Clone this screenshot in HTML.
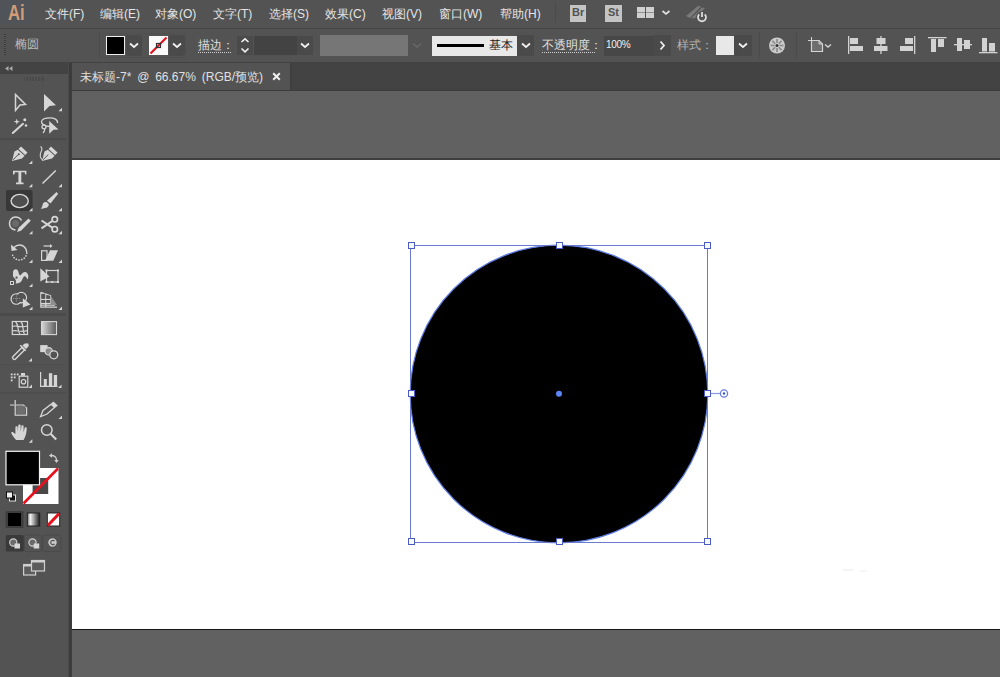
<!DOCTYPE html>
<html><head><meta charset="utf-8">
<style>
*{margin:0;padding:0;box-sizing:border-box}
html,body{width:1000px;height:677px;overflow:hidden;background:#535353;font-family:"Liberation Sans",sans-serif}
.abs{position:absolute}
#menubar{position:absolute;left:0;top:0;width:1000px;height:28px;background:#535353}
#menuline{position:absolute;left:0;top:28px;width:1000px;height:1px;background:#454545}
#ctrl{position:absolute;left:0;top:29px;width:1000px;height:33px;background:#535353}
#ctrlline{position:absolute;left:0;top:62px;width:1000px;height:1px;background:#424242}
#tabrow{position:absolute;left:72px;top:63px;width:928px;height:28px;background:#434343}
#tab{position:absolute;left:72px;top:63px;width:218px;height:27px;background:#535353}
#tabline{position:absolute;left:72px;top:90px;width:928px;height:1px;background:#3c3c3c}
#canvas{position:absolute;left:72px;top:91px;width:928px;height:586px;background:#616161}
#artboard{position:absolute;left:72px;top:160px;width:928px;height:469px;background:#fff}
#abtop{position:absolute;left:72px;top:158px;width:928px;height:2px;background:#3f3f3f}
#abbot{position:absolute;left:72px;top:629px;width:928px;height:1px;background:#151515}
#tbhead{position:absolute;left:0;top:63px;width:68px;height:11px;background:#434343}
#tb{position:absolute;left:0;top:74px;width:68px;height:603px;background:#535353}
#tbedge{position:absolute;left:68px;top:63px;width:4px;height:614px;background:#454545}
.menu{position:absolute;top:6px;font-size:12px;color:#e4e4e4;white-space:nowrap}
</style></head><body>
<div id="menubar"></div><div id="menuline"></div>
<div id="ctrl"></div><div id="ctrlline"></div>
<div id="tabrow"></div><div id="tab"></div><div class="abs" style="left:290px;top:63px;width:2px;height:27px;background:#3e3e3e"></div><div id="tabline"></div>
<div id="canvas"></div><div id="abtop"></div><div id="artboard"></div><div id="abbot"></div>
<div id="tbhead"></div><div id="tb"></div><div id="tbedge"></div>

<!-- menu -->
<div class="abs" style="left:0;top:0;width:31px;height:24px;background:#505357"></div><div class="abs" style="left:8px;top:0px;font-size:22px;font-weight:bold;color:#d39c78;letter-spacing:0px;transform:scaleX(0.76);transform-origin:0 0">Ai</div>
<div class="menu" style="left:45px">文件(F)</div>
<div class="menu" style="left:100px">编辑(E)</div>
<div class="menu" style="left:155px">对象(O)</div>
<div class="menu" style="left:213px">文字(T)</div>
<div class="menu" style="left:269px">选择(S)</div>
<div class="menu" style="left:325px">效果(C)</div>
<div class="menu" style="left:382px">视图(V)</div>
<div class="menu" style="left:439px">窗口(W)</div>
<div class="menu" style="left:500px">帮助(H)</div>


<!-- control bar -->
<div class="abs" style="left:4px;top:34px;width:2px;height:21px;background:repeating-linear-gradient(#3a3a3a 0 1px,#5a5a5a 1px 2px)"></div>
<div class="abs" style="left:15px;top:36px;font-size:12px;color:#bcbcbc;white-space:nowrap">椭圆</div>
<div class="abs" style="left:99px;top:32px;width:1px;height:26px;background:#4a4a4a"></div>
<!-- fill swatch -->
<div class="abs" style="left:102px;top:33px;width:84px;height:25px;border:1px solid #4f4f4f"></div>
<div class="abs" style="left:106px;top:36px;width:19px;height:19px;background:#000;border:1px solid #f0f0f0"></div>
<div class="abs" style="left:126px;top:35px;width:16px;height:21px;background:#4a4a4a;border-radius:2px"></div>
<svg class="abs" style="left:129px;top:42px" width="10" height="7"><polyline points="1,1.5 5,5 9,1.5" fill="none" stroke="#f0f0f0" stroke-width="1.8"/></svg>
<!-- stroke swatch -->
<div class="abs" style="left:149px;top:36px;width:19px;height:19px;background:#fafafa"></div>
<svg class="abs" style="left:149px;top:36px" width="19" height="19"><line x1="1.5" y1="17.5" x2="17.5" y2="1.5" stroke="#e0101e" stroke-width="2.2"/><rect x="7.5" y="7.5" width="4" height="4" fill="none" stroke="#333" stroke-width="1.2"/></svg>
<div class="abs" style="left:169px;top:35px;width:16px;height:21px;background:#4a4a4a;border-radius:2px"></div>
<svg class="abs" style="left:172px;top:42px" width="10" height="7"><polyline points="1,1.5 5,5 9,1.5" fill="none" stroke="#f0f0f0" stroke-width="1.8"/></svg>
<!-- stroke weight -->
<div class="abs" style="left:198px;top:37px;font-size:12px;color:#e0e0e0;white-space:nowrap">描边：</div>
<div class="abs" style="left:198px;top:52px;width:34px;height:1px;background:repeating-linear-gradient(90deg,#cfcfcf 0 1px,transparent 1px 2px)"></div>
<div class="abs" style="left:237px;top:36px;width:16px;height:19px;background:#4a4a4a"></div>
<svg class="abs" style="left:240px;top:37px" width="10" height="17"><polyline points="1.5,5 5,1.8 8.5,5" fill="none" stroke="#f0f0f0" stroke-width="1.6"/><polyline points="1.5,11.5 5,14.8 8.5,11.5" fill="none" stroke="#f0f0f0" stroke-width="1.6"/></svg>
<div class="abs" style="left:254px;top:36px;width:43px;height:19px;background:#434343"></div>
<div class="abs" style="left:297px;top:36px;width:16px;height:19px;background:#4a4a4a"></div>
<svg class="abs" style="left:300px;top:42px" width="10" height="7"><polyline points="1,1.5 5,5 9,1.5" fill="none" stroke="#f0f0f0" stroke-width="1.8"/></svg>
<div class="abs" style="left:320px;top:35px;width:88px;height:21px;background:#767676"></div>
<svg class="abs" style="left:412px;top:42px" width="10" height="7"><polyline points="1,1.5 5,5 9,1.5" fill="none" stroke="#6a6a6a" stroke-width="1.5"/></svg>
<!-- brush -->
<div class="abs" style="left:432px;top:36px;width:85px;height:20px;background:#e8e8e8"></div>
<div class="abs" style="left:437px;top:44px;width:47px;height:3px;background:#000"></div>
<div class="abs" style="left:489px;top:37px;font-size:12px;color:#222;white-space:nowrap">基本</div>
<div class="abs" style="left:517px;top:35px;width:17px;height:21px;background:#4a4a4a"></div>
<svg class="abs" style="left:521px;top:42px" width="10" height="7"><polyline points="1,1.5 5,5 9,1.5" fill="none" stroke="#f0f0f0" stroke-width="1.8"/></svg>
<!-- opacity -->
<div class="abs" style="left:542px;top:37px;font-size:12px;color:#e0e0e0;white-space:nowrap">不透明度：</div>
<div class="abs" style="left:542px;top:52px;width:54px;height:1px;background:repeating-linear-gradient(90deg,#cfcfcf 0 1px,transparent 1px 2px)"></div>
<div class="abs" style="left:604px;top:36px;width:50px;height:20px;background:#474747"></div>
<div class="abs" style="left:606px;top:39px;font-size:10px;color:#f0f0f0;white-space:nowrap;letter-spacing:-0.3px">100%</div>
<div class="abs" style="left:654px;top:35px;width:17px;height:21px;background:#4a4a4a"></div>
<svg class="abs" style="left:659px;top:40px" width="7" height="11"><polyline points="1.5,1.5 5,5.5 1.5,9.5" fill="none" stroke="#f0f0f0" stroke-width="1.8"/></svg>
<!-- style -->
<div class="abs" style="left:677px;top:37px;font-size:12px;color:#b4b4b4;white-space:nowrap">样式：</div>
<div class="abs" style="left:716px;top:36px;width:18px;height:19px;background:#e8e8e8"></div>
<div class="abs" style="left:734px;top:35px;width:18px;height:21px;background:#4a4a4a"></div>
<svg class="abs" style="left:738px;top:42px" width="10" height="7"><polyline points="1,1.5 5,5 9,1.5" fill="none" stroke="#f0f0f0" stroke-width="1.8"/></svg>
<div class="abs" style="left:759px;top:32px;width:1px;height:26px;background:#4a4a4a"></div>
<!-- recolor -->
<svg class="abs" style="left:767px;top:36px" width="20" height="20">
<circle cx="10" cy="9.5" r="8" fill="#cbcbcb"/>
<g stroke="#8a8a8a" stroke-width="1.6">
<line x1="10" y1="3" x2="10" y2="7"/><line x1="10" y1="12" x2="10" y2="16"/>
<line x1="3.5" y1="9.5" x2="7.5" y2="9.5"/><line x1="12.5" y1="9.5" x2="16.5" y2="9.5"/>
<line x1="5.4" y1="4.9" x2="8.2" y2="7.7"/><line x1="11.8" y1="11.3" x2="14.6" y2="14.1"/>
<line x1="14.6" y1="4.9" x2="11.8" y2="7.7"/><line x1="8.2" y1="11.3" x2="5.4" y2="14.1"/>
</g>
<circle cx="10" cy="9.5" r="1.5" fill="#333"/>
</svg>
<div class="abs" style="left:796px;top:32px;width:1px;height:26px;background:#4a4a4a"></div>
<!-- doc icon -->
<svg class="abs" style="left:806px;top:35px" width="28" height="19">
<path d="M5.5,5.5 H13 L16.5,9 V16.5 H5.5 Z" fill="#6e6e6e" stroke="#d4d4d4" stroke-width="1.2"/>
<path d="M13,5.5 V9 H16.5" fill="none" stroke="#d4d4d4" stroke-width="1"/>
<line x1="2" y1="5.5" x2="5" y2="5.5" stroke="#d4d4d4" stroke-width="1"/>
<line x1="5.5" y1="2" x2="5.5" y2="5" stroke="#d4d4d4" stroke-width="1"/>
<polyline points="19,9.5 22,12 25,9.5" fill="none" stroke="#d0d0d0" stroke-width="1.5"/>
</svg>
<!-- align icons -->
<svg class="abs" style="left:840px;top:30px" width="160" height="32" fill="#d2d2d2">
<rect x="8" y="6" width="1.3" height="18"/><rect x="10" y="8" width="8" height="6"/><rect x="10" y="16" width="13" height="5"/>
<rect x="40.3" y="6" width="1.3" height="18"/><rect x="36.5" y="8" width="9" height="6"/><rect x="34" y="16" width="13.5" height="5"/>
<rect x="74" y="6" width="1.3" height="18"/><rect x="65" y="8" width="8" height="6"/><rect x="60" y="16" width="13" height="5"/>
<rect x="88" y="7" width="18.5" height="1.3"/><rect x="91" y="9" width="5" height="13"/><rect x="98" y="9" width="6" height="8"/>
<rect x="114" y="14" width="18" height="1.3"/><rect x="117" y="8" width="5" height="13"/><rect x="124" y="10" width="6" height="9"/>
<rect x="139" y="22" width="18.5" height="1.3"/><rect x="142" y="8" width="5" height="13.5"/><rect x="149" y="13" width="6" height="8.5"/>
</svg>


<!-- toolbar -->
<svg class="abs" style="left:0;top:0" width="72" height="677">
<g fill="#4b4b4b"><rect x="0" y="313" width="66" height="3"/><rect x="0" y="138" width="66" height="2"/></g><g fill="#4e4e4e"><rect x="0" y="392" width="66" height="2"/><rect x="0" y="364" width="66" height="1"/></g>
<rect x="68" y="63" width="1" height="614" fill="#4a4a4a"/><rect x="69" y="63" width="3" height="614" fill="#3c3c3c"/>
<g fill="#a8a8a8"><path d="M8.5,66 L5,68.5 L8.5,71 Z M12.5,66 L9,68.5 L12.5,71 Z"/></g>
<rect x="24" y="77" width="20" height="4" fill="#4a4a4a"/><g fill="#555"><rect x="25" y="77" width="1" height="4"/><rect x="28" y="77" width="1" height="4"/><rect x="31" y="77" width="1" height="4"/><rect x="34" y="77" width="1" height="4"/><rect x="37" y="77" width="1" height="4"/><rect x="40" y="77" width="1" height="4"/></g>

<g fill="none" stroke="#d6d6d6" stroke-width="1.5" stroke-linejoin="miter">
<!-- selection -->
<path d="M15.5,94.5 L25.5,104.5 L20,105 L15.5,110.5 Z"/>
</g>
<g fill="#d6d6d6">
<path d="M44,94 L56,105.3 L49.5,106 L44,111.5 Z"/>
</g>
<!-- magic wand -->
<g stroke="#d6d6d6" fill="#d6d6d6">
<line x1="12.8" y1="133" x2="23" y2="123.8" stroke-width="2" stroke-linecap="round"/>
<path d="M16.8,118.5 L17.6,120.9 L20,121.6 L17.6,122.4 L16.8,124.8 L16,122.4 L13.6,121.6 L16,120.9 Z" stroke="none"/>
<circle cx="24.8" cy="119.8" r="1.5" stroke="none"/><circle cx="26" cy="125.5" r="1.3" stroke="none"/>
</g>
<!-- lasso -->
<g fill="none" stroke="#d6d6d6" stroke-width="1.3">
<path d="M50,126.5 C45,126.5 41.2,124 41.5,121.5 C42,118.8 46,117.8 50,117.8 C54,117.8 58,119.5 57.5,123"/>
<circle cx="44" cy="126.8" r="2"/>
<path d="M44.5,128.8 C45.2,130.5 44,132 43,133"/>
</g>
<path d="M49.2,121 L58.5,129.6 L53.5,129.8 L49.2,133.8 Z" fill="#d6d6d6"/>
<!-- pen -->
<g fill="#d6d6d6">
<path d="M21,146.5 L27.5,152.5 L25.2,155 L18.5,149 Z"/>
<path d="M17.8,149.8 L24.6,155.8 L22,158.5 L12,161 L14.5,151.5 Z"/>
</g>
<line x1="12.8" y1="160" x2="18.2" y2="154.6" stroke="#535353" stroke-width="1"/>
<circle cx="18.8" cy="154.2" r="1" fill="#535353"/>
<!-- curvature pen -->
<g fill="#d6d6d6">
<path d="M51,146.5 L57.5,152.5 L55.2,155 L48.5,149 Z"/>
<path d="M47.8,149.8 L54.6,155.8 L52,158.5 L42,161 L44.5,151.5 Z"/>
</g>
<line x1="42.8" y1="160" x2="48.2" y2="154.6" stroke="#535353" stroke-width="1"/>
<path d="M40.5,146.5 C43,148 42,150 41,152 C39.5,155 40,159 43,160" fill="none" stroke="#d6d6d6" stroke-width="1.1"/>
<!-- type -->
<path d="M13,170.8 H26.4 V174.4 H25.2 L24.6,172.3 H21.3 V182.6 H23.5 V184.2 H16 V182.6 H18.4 V172.3 H15 L14.3,174.4 H13 Z" fill="#d6d6d6"/>
<!-- line -->
<line x1="42.5" y1="183.5" x2="55.8" y2="170.5" stroke="#d6d6d6" stroke-width="1.5"/>
<!-- ellipse selected -->
<rect x="6" y="190" width="26.5" height="21" rx="2" fill="#383838"/>
<ellipse cx="19.7" cy="201" rx="8.6" ry="6.6" fill="#4e4e4e" stroke="#d6d6d6" stroke-width="1.4"/>
<!-- paintbrush -->
<path d="M56.5,192 L58.2,193.8 L50.5,203.5 L47,200.8 Z" fill="#d6d6d6"/>
<path d="M46.5,202 C44,201.5 42.5,203.5 42.5,205.5 L41,209 L45,208 C47.5,208 49,206 48.8,204 Z" fill="#d6d6d6"/>
<!-- shaper -->
<path d="M21.5,220.5 C20,217.8 17.5,217 15.5,217 C11.5,217 9.5,220.5 9.5,223.5 C9.5,227 12,229.5 15.5,230" fill="none" stroke="#d6d6d6" stroke-width="1.5"/>
<circle cx="15.5" cy="223.5" r="3.5" fill="#6a6a6a"/>
<path d="M28.5,218.5 L30.8,220.8 L21,230.8 L17,232 L18.5,228 Z" fill="#d6d6d6"/>
<!-- scissors -->
<g fill="none" stroke="#d6d6d6" stroke-width="1.7">
<circle cx="54.8" cy="219.3" r="2.7"/><circle cx="54.8" cy="229.2" r="2.7"/>
<path d="M41.5,220.5 L52.3,227.6 M41.5,228.3 L52.3,221" stroke-width="2"/>
</g>
<!-- rotate -->
<g fill="none" stroke="#d6d6d6" stroke-width="1.5">
<path d="M14,247.5 C16,245.5 18,245 19.5,245 C23.5,245 26.8,248.5 26.8,252.5"/>
<path d="M26.8,252.5 C26.8,256.5 23.5,260 19.5,260 C15.5,260 12.5,257 12.3,253.5" stroke-dasharray="1.5 1.3"/>
</g>
<path d="M11,244.5 L11.5,251 L17.5,250 Z" fill="#d6d6d6"/>
<!-- shear -->
<g fill="none" stroke="#d6d6d6" stroke-width="1.2">
<rect x="41.6" y="250.8" width="5.4" height="9.6"/>
<line x1="43.5" y1="246" x2="51" y2="246"/>
</g>
<path d="M50,244 L52.5,246 L50,248 Z" fill="#d6d6d6"/>
<path d="M45,260.7 L50,250.3 H58 L53.3,260.7 Z" fill="#d6d6d6"/>
<!-- puppet warp -->
<path d="M13,272.5 C13,269.5 16,268.5 17.5,270 C19,271.5 18,273 19.5,275 C21,276.5 22.5,271 25.5,272 C28.5,273 29,277 27.5,279.5 C26.5,277 25.5,275.5 24,276.5 C22,278 22.5,283 17,283.5 L15.5,283.5 C17,281 15,278 13,276.5 Z" fill="#d6d6d6"/>
<circle cx="16.5" cy="277.5" r="1.5" fill="#535353" stroke="#d6d6d6" stroke-width="0.8"/>
<rect x="10.5" y="281.5" width="3" height="3" fill="none" stroke="#d6d6d6" stroke-width="1"/>
<!-- free transform -->
<path d="M40.3,268.3 L49.5,276.4 L40.3,281.5 Z" fill="#d6d6d6"/>
<rect x="46.5" y="270.5" width="11.5" height="11.5" fill="none" stroke="#d6d6d6" stroke-width="1.2"/>
<g fill="#d6d6d6"><rect x="45.5" y="269.5" width="2" height="2"/><rect x="57" y="269.5" width="2" height="2"/><rect x="45.5" y="281" width="2" height="2"/><rect x="57" y="281" width="2" height="2"/><rect x="51.3" y="281" width="2" height="2"/></g>
<!-- shape builder -->
<g fill="none" stroke="#d6d6d6" stroke-width="1.3">
<circle cx="16.3" cy="299" r="5.2"/><circle cx="21.3" cy="297.6" r="5.2"/>
</g>
<g fill="#535353"><circle cx="16.3" cy="299" r="4.5"/><circle cx="21.3" cy="297.6" r="4.5"/></g>
<path d="M13,298.5 H20 M16.5,295.5 V302" stroke="#9a9a9a" stroke-width="0.9" stroke-dasharray="1 1"/>
<path d="M22.8,298.3 L30.5,304.6 L22.8,307.6 Z" fill="#d6d6d6"/>
<!-- perspective grid -->
<g fill="none" stroke="#d6d6d6" stroke-width="1.2">
<path d="M40.8,292.3 V307.2 H57 M40.8,292.3 L50.5,295.6 V303.3 H40.8 M40.8,299.3 H50.5 M45.8,294 V307.2 M40.8,305.2 H55"/>
</g>
<path d="M50.5,295.6 L57,305 H50.5 Z" fill="#8e8e8e"/>
<g fill="#535353"><rect x="41.5" y="293.8" width="3.6" height="4.8"/><rect x="46.5" y="295.5" width="3.3" height="3.2"/><rect x="41.5" y="300" width="3.6" height="2.7"/><rect x="46.5" y="300" width="3.3" height="2.7"/></g>
<!-- mesh -->
<g fill="none" stroke="#d6d6d6" stroke-width="1.2">
<rect x="12.3" y="321.5" width="15.2" height="13"/>
<path d="M15.5,321.5 C19,325 17,330 20,334.5 M21,321.5 C24,325 22,330 24.5,334.5 M12.3,326.5 C16,324.5 21,328.5 27.5,326 M12.3,331 C16,329.5 21,333 27.5,330.5"/>
</g>
<!-- gradient -->
<defs><linearGradient id="gr1" x1="0" x2="1"><stop offset="0" stop-color="#d8d8d8"/><stop offset="1" stop-color="#5a5a5a"/></linearGradient>
<linearGradient id="gr2" x1="0" x2="1"><stop offset="0" stop-color="#707070"/><stop offset="0.25" stop-color="#f2f2f2"/><stop offset="1" stop-color="#1a1a1a"/></linearGradient></defs>
<rect x="41.5" y="321.6" width="15" height="13" fill="url(#gr1)" stroke="#d6d6d6" stroke-width="1.1"/>
<!-- eyedropper -->
<g fill="none" stroke="#d6d6d6" stroke-width="1.4">
<path d="M13,356.5 L22,347.5 L24.5,350 L15.5,359 C14,360.5 11.5,358 13,356.5 Z"/>
</g>
<path d="M22.5,345.5 L26,349 L28,347 C29.3,345.7 29,343.5 27.2,343.2 C26,343 25,344 24.5,343.5 Z" fill="#d6d6d6"/><line x1="20.3" y1="345.3" x2="25.7" y2="350.7" stroke="#d6d6d6" stroke-width="1.6"/>
<!-- blend -->
<rect x="40.2" y="345.1" width="7.4" height="7" fill="#d6d6d6"/>
<circle cx="48.7" cy="351.3" r="3.7" fill="#8a8a8a" stroke="#d6d6d6" stroke-width="1.2"/>
<circle cx="53.8" cy="354.8" r="4" fill="#535353" stroke="#d6d6d6" stroke-width="1.3"/>
<!-- symbol sprayer -->
<g fill="#d6d6d6"><rect x="10.8" y="373.5" width="1.8" height="1.8"/><rect x="13.8" y="373.5" width="1.8" height="1.8"/><rect x="16.8" y="373.5" width="1.8" height="1.8"/><rect x="10.8" y="376.5" width="1.8" height="1.8"/><rect x="13.8" y="376.5" width="1.8" height="1.8"/><rect x="10.8" y="379.5" width="1.8" height="1.8"/>
<rect x="21" y="373" width="4" height="2.8"/></g>
<rect x="19.2" y="376.2" width="8.6" height="11" fill="none" stroke="#d6d6d6" stroke-width="1.2"/>
<circle cx="23.5" cy="381.7" r="2.2" fill="none" stroke="#d6d6d6" stroke-width="1.2"/>
<!-- column graph -->
<path d="M40.6,372 V386.3 H57.5" fill="none" stroke="#d6d6d6" stroke-width="1.2"/>
<g fill="#d6d6d6"><rect x="43.8" y="379" width="3" height="7"/><rect x="48.9" y="373.2" width="3.3" height="13"/><rect x="53.8" y="375" width="3.3" height="11"/></g>
<!-- artboard -->
<g fill="none" stroke="#d6d6d6" stroke-width="1.2">
<path d="M10,405 H14.5 M15.2,400 V404.5"/>
<path d="M15.2,405 H23.5 L26.6,408 V415.2 H15.2 Z"/>
</g>
<rect x="16.3" y="406" width="9.2" height="8.3" fill="#6e6e6e"/>
<!-- pencil/knife -->
<path d="M53.5,402.4 L56.8,405.4 L47,414 L40.6,416.5 L43,410.4 Z" fill="none" stroke="#d6d6d6" stroke-width="1.3"/>
<path d="M53.5,402.4 L56.8,405.4 L54.2,408 L51,405 Z" fill="#d6d6d6"/>
<!-- hand -->
<path transform="translate(11,0) scale(1.26,1) translate(-11,0)" d="M15,440 C13,437 11,433.5 11.2,432.5 C11.5,431.5 12.8,432 14,433.5 L14.5,434 V427 C14.5,426 16.3,426 16.3,427 V432 L16.8,425.5 C16.8,424.3 18.7,424.3 18.7,425.5 V432 L19.3,426 C19.3,425 21,425 21,426 V432.5 L21.8,428 C21.8,427 23.5,427 23.5,428 C23.5,431 23,436 21,440 Z" fill="#d6d6d6"/>
<!-- zoom -->
<circle cx="46.8" cy="430" r="5.3" fill="none" stroke="#d6d6d6" stroke-width="1.5"/>
<line x1="50.6" y1="433.8" x2="56.2" y2="439.5" stroke="#d6d6d6" stroke-width="2.2"/>
<!-- fill / stroke -->
<rect x="23" y="468" width="35.5" height="36" fill="#fff"/>
<rect x="32.6" y="478" width="15.6" height="16" fill="#484848"/>
<line x1="23.5" y1="503.5" x2="58" y2="468.5" stroke="#e8101c" stroke-width="2.6"/>
<rect x="6" y="451.3" width="33.5" height="33.5" fill="#000" stroke="#f2f2f2" stroke-width="1.2"/>
<path d="M51.5,455.5 C54.5,455.5 56.5,457.5 56.5,460" fill="none" stroke="#cfcfcf" stroke-width="1.3"/>
<path d="M49,455.5 L52,453.3 V457.7 Z M56.5,463 L54.3,460 H58.7 Z" fill="#cfcfcf"/>
<rect x="9.5" y="495" width="6" height="6" fill="#111" stroke="#e0e0e0" stroke-width="1"/>
<rect x="6.5" y="492" width="6" height="6" fill="#f2f2f2" stroke="#111" stroke-width="1"/>
<!-- color modes -->
<rect x="5.5" y="511" width="18" height="17" rx="1.5" fill="#3e3e3e"/>
<rect x="8" y="513" width="13" height="13" fill="#000"/>
<rect x="27.3" y="513" width="12.4" height="13" fill="url(#gr2)" stroke="#222" stroke-width="1"/>
<rect x="47.3" y="513" width="12.4" height="13" fill="#fff" stroke="#222" stroke-width="1"/>
<line x1="47.8" y1="525.5" x2="59.2" y2="513.5" stroke="#e8101c" stroke-width="3"/>
<!-- draw modes -->
<rect x="5.8" y="535" width="18" height="16.5" rx="1.5" fill="#3a3a3a"/>
<rect x="24.5" y="535" width="17" height="16.5" rx="1.5" fill="none" stroke="#4a4a4a" stroke-width="1"/>
<rect x="43" y="535" width="18" height="16.5" rx="1.5" fill="none" stroke="#4a4a4a" stroke-width="1"/>
<g fill="#6a6a6a" stroke="#d0d0d0" stroke-width="1.2">
<circle cx="13.3" cy="542.5" r="3.6"/><circle cx="32.5" cy="542.5" r="3.6"/>
</g>
<rect x="14.5" y="543.5" width="5.5" height="5" fill="#d6d6d6"/>
<rect x="33.7" y="543.5" width="5.5" height="5" fill="#d6d6d6"/>
<circle cx="52.5" cy="542.5" r="4.2" fill="#c8c8c8"/>
<path d="M54.5,541 A2.2,2.2 0 1 0 54.5,544" fill="none" stroke="#555" stroke-width="1.2"/>
<!-- screen mode -->
<g fill="#5c5c5c" stroke="#cfcfcf" stroke-width="1.2">
<rect x="23.6" y="564.5" width="12" height="10.5"/>
<rect x="31.5" y="560.5" width="13" height="10.5"/>
</g>
<rect x="31.5" y="560.5" width="13" height="2" fill="#cfcfcf"/>
<rect x="23.6" y="564.5" width="8" height="2" fill="#cfcfcf"/>
<g fill="#d6d6d6" stroke="none"><path d="M58.5,111.3 L62.0,107.8 V111.3 Z"/><path d="M28.8,164.1 L32.3,160.6 V164.1 Z"/><path d="M28.8,187.3 L32.3,183.8 V187.3 Z"/><path d="M58.5,187.3 L62.0,183.8 V187.3 Z"/><path d="M29,211.3 L32.5,207.8 V211.3 Z"/><path d="M58.5,211.3 L62.0,207.8 V211.3 Z"/><path d="M29,234.3 L32.5,230.8 V234.3 Z"/><path d="M58.5,234.3 L62.0,230.8 V234.3 Z"/><path d="M29,263.1 L32.5,259.6 V263.1 Z"/><path d="M58.5,263.1 L62.0,259.6 V263.1 Z"/><path d="M29,287.1 L32.5,283.6 V287.1 Z"/><path d="M29,310.0 L32.5,306.5 V310.0 Z"/><path d="M58.5,310.0 L62.0,306.5 V310.0 Z"/><path d="M28.5,361.5 L32.0,358 V361.5 Z"/><path d="M28.5,388.0 L32.0,384.5 V388.0 Z"/><path d="M58,388.0 L61.5,384.5 V388.0 Z"/><path d="M58.5,419.0 L62.0,415.5 V419.0 Z"/><path d="M28.8,442.8 L32.3,439.3 V442.8 Z"/></g>
</svg>


<!-- menubar icons -->
<div class="abs" style="left:555px;top:3px;width:1px;height:20px;background:#4a4a4a"></div>
<div class="abs" style="left:570px;top:5px;width:16px;height:17px;background:#c4c4c4"></div>
<div class="abs" style="left:572px;top:6px;font-size:11px;font-weight:bold;color:#535353;white-space:nowrap">Br</div>
<div class="abs" style="left:605px;top:5px;width:17px;height:17px;background:#c4c4c4"></div>
<div class="abs" style="left:608px;top:6px;font-size:11px;font-weight:bold;color:#535353;white-space:nowrap">St</div>
<svg class="abs" style="left:636px;top:6px" width="36" height="14" fill="#d0d0d0">
<rect x="1" y="1" width="8" height="5.5"/><rect x="1" y="7" width="8" height="5"/><rect x="10" y="1" width="8" height="5.5"/><rect x="10" y="7" width="8" height="5"/>
<polyline points="26.5,5 30,8 33.5,5" fill="none" stroke="#e0e0e0" stroke-width="1.7"/>
</svg>
<svg class="abs" style="left:684px;top:3px" width="26" height="21">
<path d="M2,13 L14,3 L17,3.5 L6,15 Z M7,15.5 L18,4.5 L21,5 L11,15 Z" fill="#7a7a7a"/>
<circle cx="18" cy="14" r="6" fill="#535353"/>
<path d="M15.3,11.3 A4,4 0 1 0 20.7,11.3" fill="none" stroke="#dcdcdc" stroke-width="1.8"/>
<line x1="18" y1="9" x2="18" y2="14" stroke="#dcdcdc" stroke-width="1.8"/>
</svg>
<!-- tab close -->
<svg class="abs" style="left:272px;top:72px" width="9" height="9"><path d="M1.2,1.2 L7.8,7.8 M7.8,1.2 L1.2,7.8" stroke="#f0f0f0" stroke-width="2"/></svg>

<div class="abs" style="left:843px;top:569px;width:10px;height:2px;background:#f4f4f4"></div><div class="abs" style="left:860px;top:570px;width:7px;height:2px;background:#f6f6f6"></div>
<!-- tab text -->
<div class="abs" style="left:80px;top:69px;font-size:12px;color:#e0e0e0;white-space:nowrap;word-spacing:2.5px">未标题-7* @ 66.67% (RGB/预览)</div>

<!-- circle -->
<svg class="abs" style="left:0;top:0" width="1000" height="677">
<circle cx="559" cy="394" r="148.8" fill="#000"/>
<circle cx="559" cy="394" r="148.8" fill="none" stroke="#5f7de0" stroke-width="1.2"/>
<rect x="410.5" y="245.5" width="297" height="297" fill="none" stroke="#6a7bd0" stroke-width="1"/>
<g fill="#f4fcff" stroke="#4c5cc4" stroke-width="1"><rect x="408.5" y="242.5" width="6" height="6"/><rect x="556.5" y="242.5" width="6" height="6"/><rect x="704.5" y="242.5" width="6" height="6"/><rect x="408.5" y="390.5" width="6" height="6"/><rect x="704.5" y="390.5" width="6" height="6"/><rect x="408.5" y="538.5" width="6" height="6"/><rect x="556.5" y="538.5" width="6" height="6"/><rect x="704.5" y="538.5" width="6" height="6"/></g>
<circle cx="559" cy="393.8" r="3" fill="#5b86f5"/>
<line x1="711" y1="393.5" x2="720" y2="393.5" stroke="#8a9be0" stroke-width="1.2"/>
<circle cx="724" cy="393.5" r="3.6" fill="#fff" stroke="#6a80dc" stroke-width="1.3"/>
<circle cx="724" cy="393.5" r="1.2" fill="#3a58c8"/>
</svg>
</body></html>
